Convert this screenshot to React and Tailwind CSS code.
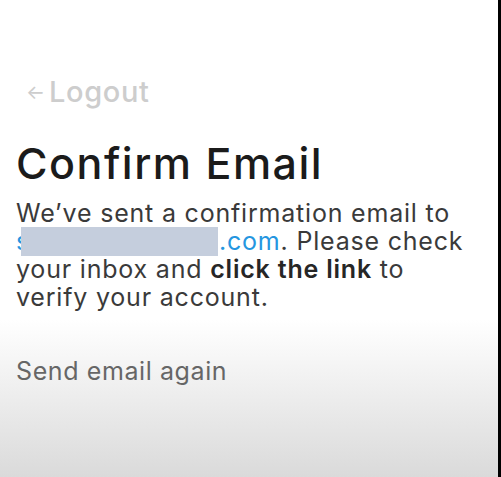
import React from "react";

const App = () => {
  return (
    <div className="flex h-[477px] w-[501px] overflow-hidden font-['Inter',sans-serif]">
      <div className="flex flex-1 flex-col bg-[linear-gradient(to_bottom,#ffffff_0px,#ffffff_320px,#dadada_477px)] pl-4 pr-2">
        {/* back link */}
        <div className="mt-[76px] flex items-center gap-[4px] pl-[10px] text-[#cdcdcd]">
          <span className="text-[20px] leading-none">←</span>
          <span className="text-[29px] font-medium leading-[32px] tracking-[0.6px]">Logout</span>
        </div>

        <h1 className="mt-[31px] text-[43px] font-medium leading-[48px] tracking-[1.5px] text-[#1b1b1b]">
          Confirm Email
        </h1>

        <p className="mt-[12px] whitespace-nowrap text-[25px] leading-[28px] tracking-[0.8px] text-[#3a3a3a]">
          We’ve sent a confirmation email to
          <br />
          <span className="text-[#2596e0]">
            s
            <span className="relative inline-block w-[189px]">
              <span className="absolute left-[-9px] top-[-23px] h-[29px] w-[197px] bg-[#c5cedd]" />
            </span>
            .com
          </span>
          . Please check
          <br />
          your inbox and <b className="font-semibold text-[#262626]">click the link</b> to
          <br />
          verify your account.
        </p>

        <button className="mt-[46px] self-start text-[25px] leading-[28px] tracking-[0.6px] text-[#666666]">
          Send email again
        </button>
      </div>
      <div className="w-[3px] bg-black" />
    </div>
  );
};

export default App;
